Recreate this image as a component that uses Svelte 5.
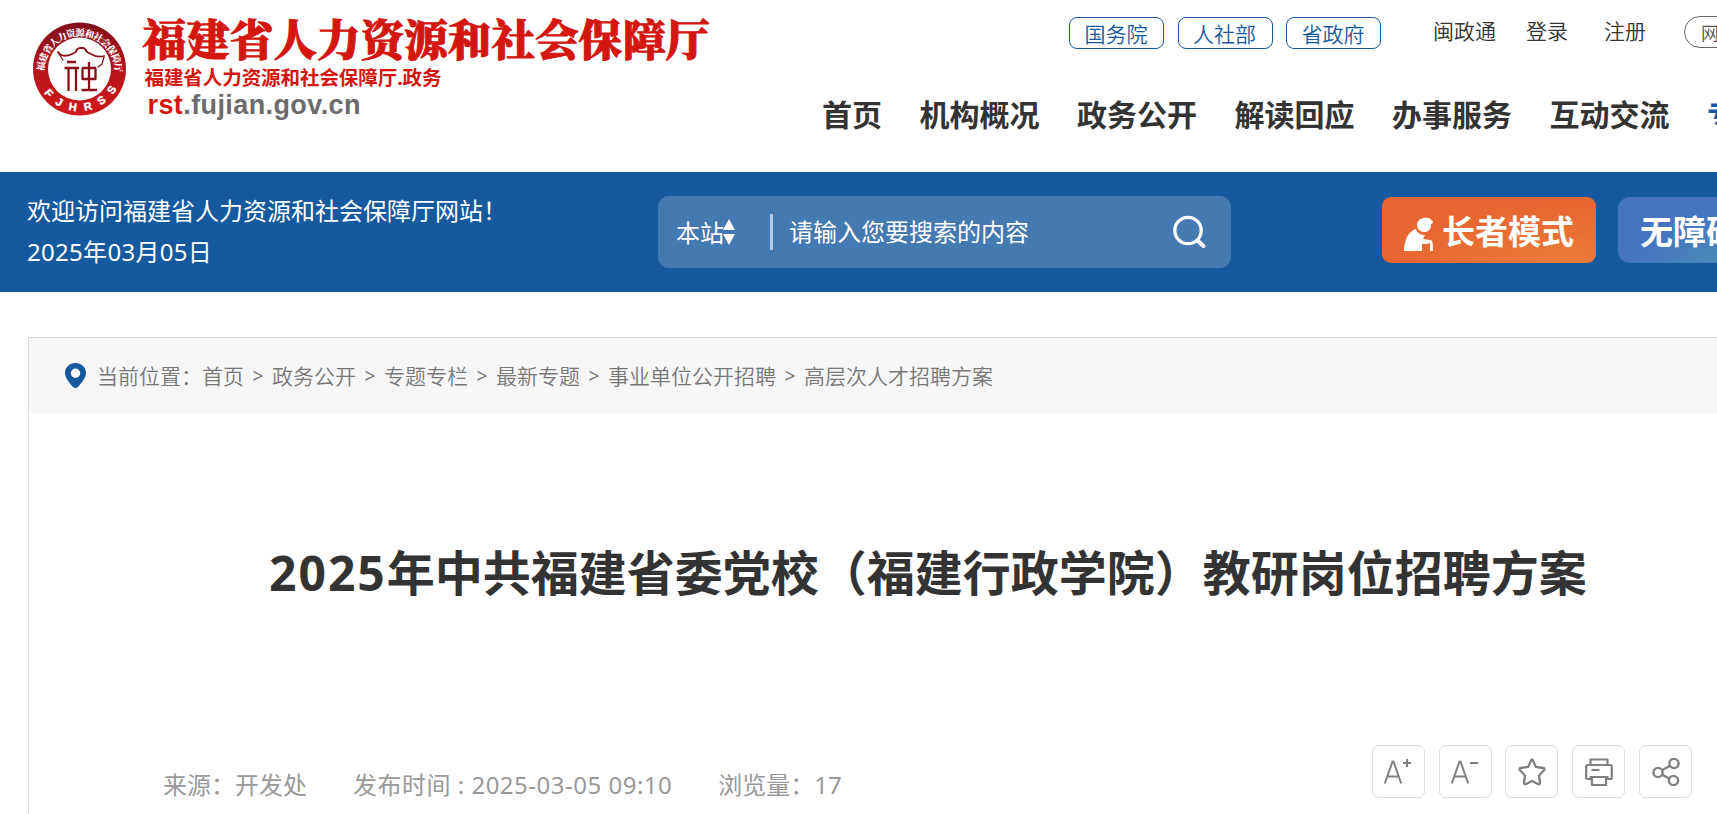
<script>
  // Links do topo
  const portals = ['国务院', '人社部', '省政府'];
  const accountLinks = ['闽政通', '登录', '注册'];

  const menu = ['首页', '机构概况', '政务公开', '解读回应', '办事服务', '互动交流', '专题专栏'];
  const activeMenu = '专题专栏';

  const crumbs = ['首页', '政务公开', '专题专栏', '最新专题', '事业单位公开招聘', '高层次人才招聘方案'];

  const tools = ['larger', 'smaller', 'star', 'print', 'share'];

  let keyword = '';
</script>

<div class="page">
  <header class="header">
    <svg class="logo" width="720" height="130" viewBox="0 0 720 130">
      <defs>
        <linearGradient id="seal" x1="0" y1="0" x2="0" y2="1">
          <stop offset="0" stop-color="#80101a" />
          <stop offset="0.55" stop-color="#b9151b" />
          <stop offset="1" stop-color="#d01a1c" />
        </linearGradient>
        <path id="arcTop" d="M44.2 71.500 A35.300 35.300 0 1 1 114.800 71.500" />
        <path id="arcBottom" d="M39 84 A43 43 0 0 0 119 84" />
      </defs>
      <circle cx="79.5" cy="69" r="46.5" fill="url(#seal)" />
      <circle cx="79.5" cy="69" r="31.5" fill="#fff" />
      <text class="ring serif" font-size="9.5"><textPath href="#arcTop" textLength="112">福建省人力资源和社会保障厅</textPath></text>
      <text class="ring latin" font-size="11"><textPath href="#arcBottom" startOffset="10" textLength="87">FJHRSS</textPath></text>
      <g fill="none" stroke="#8a1119" stroke-linecap="round" stroke-linejoin="round">
        <path stroke-width="1.8" d="M58 52 C60 56 66 57 72 54 L76 52 C76 50 78 48 80 48 H83 C85 48 86 50 87 52 L91 54 C96 57 101 57 104 56" />
        <path stroke-width="1.3" d="M59 54 L63 60 M104 57 L102 64 L98 67" />
        <path stroke-width="2.3" stroke-linecap="butt" d="M67 62 H76 M64.500 68 H79 M68.500 68 V91 M76 68 V91 M82 68 H96 M82.500 68 V79 H95.500 V68 M89 62 V90 M81.500 90 H97" />
      </g>
      <text class="name" x="142.5" y="55.5" font-size="43.5" textLength="567">福建省人力资源和社会保障厅</text>
      <text class="subname" x="144.5" y="85" font-size="19.5" textLength="297">福建省人力资源和社会保障厅.政务</text>
      <text class="domain" x="147.5" y="114" font-size="27" textLength="213"><tspan fill="#d3160f">rst</tspan>.fujian.gov.cn</text>
    </svg>

    <div class="header-right">
      <div class="top-links">
        {#each portals as portal}
          <a class="portal" href="#top">{portal}</a>
        {/each}
        <div class="account">
          {#each accountLinks as link}
            <a href="#top">{link}</a>
          {/each}
        </div>
        <a class="site-group" href="#top">网站群</a>
      </div>
      <nav class="menu">
        {#each menu as item}
          <a class:active={item === activeMenu} href="#top">{item}</a>
        {/each}
      </nav>
    </div>
  </header>

  <section class="band">
    <div class="welcome">
      <p>欢迎访问福建省人力资源和社会保障厅网站！</p>
      <p class="date">2025年03月05日</p>
    </div>
    <div class="search">
      <span class="scope">本站</span>
      <svg class="sort" width="12" height="26" viewBox="0 0 12 26">
        <path d="M6 0 L12 11 H0 Z M0 15 H12 L6 26 Z" fill="#fff" />
      </svg>
      <span class="divider"></span>
      <input type="text" bind:value={keyword} placeholder="请输入您要搜索的内容" />
      <svg width="34" height="34" viewBox="0 0 34 34" fill="none" stroke="#fff" stroke-width="3.300" stroke-linecap="round">
        <circle cx="15" cy="15.5" r="13.2" />
        <path d="M24.500 25.500 L30.500 31" stroke-width="4" />
      </svg>
    </div>
    <a class="mode elder" href="#top">
      <svg width="30" height="34" viewBox="0 0 30 34" fill="#fff">
        <path d="M13 7 C14 2 19 0 24 1 C27 1.500 27.500 3 29 4.500 L28.500 6.500 L27 7 C27.500 12 24 15.500 20 15 C16 15 13 12 13 7 Z" />
        <path d="M0 34 C0 24 4 14 12 12 C13 16 17 18 21 18 L19 22 L26 23 C29 23.500 29 26 29 34 H26 V26 L23 27 L18 27 V34 Z" />
      </svg>
      长者模式
    </a>
    <a class="mode barrier" href="#top">无障碍浏览</a>
  </section>

  <main class="article">
    <div class="crumbs">
      <svg width="21" height="25" viewBox="0 0 21 25">
        <path fill="#15599f" fill-rule="evenodd" d="M10.500 0 C4.500 0 0 4.500 0 10 C0 15 4 19 8 24 Q10.500 26 13 24 C17 19 21 15 21 10 C21 4.500 16.500 0 10.500 0 Z M10.500 5.500 A4.700 4.700 0 1 1 10.500 15 A4.700 4.700 0 1 1 10.500 5.500 Z" />
      </svg>
      <span class="here">当前位置：</span>
      {#each crumbs as crumb, i}
        {#if i > 0}<span class="sep">&gt;</span>{/if}
        <a href="#top">{crumb}</a>
      {/each}
    </div>

    <h1><span>2025</span>年中共福建省委党校（福建行政学院）教研岗位招聘方案</h1>

    <div class="info">
      <div class="meta">
        <span>来源：开发处</span>
        <span class="time">发布时间 : 2025-03-05 09:10</span>
        <span>浏览量：17</span>
      </div>
      <div class="tools">
        {#each tools as tool}
          <button aria-label={tool}>
            <svg width="28" height="28" viewBox="0 0 28 28" fill="none" stroke="#808080" stroke-width="2" stroke-linejoin="round">
              {#if tool === 'larger'}
                <path d="M.8 25.500 L8.500 3.500 H9.500 L17.200 25.500 M3.500 18.500 H14.500 M19 5 H27 M23 1 V9" />
              {:else if tool === 'smaller'}
                <path d="M.8 25.500 L8.500 3.500 H9.500 L17.200 25.500 M3.500 18.500 H14.500 M19 5 H27" />
              {:else if tool === 'star'}
                <path stroke-width="2.300" d="M13 2.500 Q14 .5 15 2.500 L17.800 8.800 L25 10 Q27.500 10.500 25.800 12.500 L21 17.500 L22 24.500 Q22.300 27 20 26 L14 23 L8 26 Q5.700 27 6 24.500 L7 17.500 L2.200 12.500 Q.5 10.500 3 10 L10.200 8.800 Z" />
              {:else if tool === 'print'}
                <path stroke-width="2.200" d="M5.500 7 V1.500 H22.500 V7 M6 21 H2.500 Q1.200 21 1.200 19.500 V8.500 Q1.200 7 2.500 7 H25.500 Q26.800 7 26.800 8.500 V19.500 Q26.800 21 25.500 21 H22 M4.500 19 H23.500 M7 19 V27 H21 V19 M6.500 12 H14.500" />
              {:else}
                <g stroke-width="2.400">
                  <circle cx="6" cy="14.500" r="4.600" />
                  <circle cx="22" cy="5.500" r="4.600" />
                  <circle cx="21.500" cy="22.500" r="4.600" />
                  <path d="M10 12.200 L18 7.800 M10 16.600 L17.500 20.500" />
                </g>
              {/if}
            </svg>
          </button>
        {/each}
      </div>
    </div>
  </main>
</div>

<style>
  :global(body) {
    background: #fff;
    overflow: hidden;
  }

  .page {
    width: 1717px;
    height: 814px;
    overflow: hidden;
    font-family: "Noto Sans", "Noto Sans CJK SC", sans-serif;
    color: #333;
  }

  a {
    color: inherit;
    text-decoration: none;
    white-space: nowrap;
  }

  .header {
    display: flex;
    height: 172px;
  }

  .logo {
    flex: none;
  }

  .ring {
    fill: #fff;
    font-weight: 700;
  }

  .serif {
    font-family: "Noto Serif CJK SC", "Noto Sans CJK SC", serif;
    font-weight: 900;
  }

  .latin {
    font-family: "Liberation Sans", Arial, sans-serif;
    stroke: #fff;
    stroke-width: 0.4;
  }

  .name {
    fill: #d3160f;
    stroke: #d3160f;
    stroke-width: 1;
    font-family: "Noto Serif CJK SC", "Noto Sans CJK SC", serif;
    font-weight: 900;
  }

  .subname {
    fill: #d3160f;
    font-weight: 700;
  }

  .domain {
    fill: #6b6b6b;
    font-family: "Liberation Sans", Arial, sans-serif;
    font-weight: 700;
  }

  .header-right {
    flex: none;
    width: 997px;
  }

  .top-links {
    display: flex;
    align-items: flex-start;
    padding: 17px 0 0 349px;
    font-family: "Noto Sans CJK SC", sans-serif;
    font-size: 21px;
    font-weight: 350;
  }

  .portal {
    flex: none;
    box-sizing: border-box;
    width: 95px;
    height: 32px;
    margin-right: 13.500px;
    padding-right: 1px;
    border: 1px solid #15599f;
    border-radius: 8px;
    color: #15599f;
    line-height: 30px;
    text-align: center;
  }

  .account {
    display: flex;
    flex: none;
    width: 251px;
    margin-left: 38.500px;
    line-height: 27px;
  }

  .account a {
    margin-right: 30px;
  }

  .account a:nth-child(2) {
    margin-right: 36px;
  }

  .site-group {
    flex: none;
    height: 30px;
    margin-top: -1px;
    padding: 0 16px;
    border: 1px solid #666;
    border-radius: 16px;
    color: #555;
    font-size: 18px;
    line-height: 31px;
  }

  .menu {
    display: flex;
    gap: 37.500px;
    padding: 44px 0 0 102px;
    font-size: 30px;
    font-weight: 700;
    line-height: 44px;
  }

  .active {
    color: #15599f;
  }

  .band {
    display: flex;
    box-sizing: border-box;
    height: 120px;
    padding: 24px 0 0 27px;
    background: #15599f;
    color: #fff;
  }

  .welcome {
    flex: none;
    width: 631px;
    margin-top: -6px;
    font-size: 24px;
    line-height: 41px;
  }

  .welcome p {
    margin: 0;
  }

  .welcome .date {
    letter-spacing: 0.3px;
  }

  .search {
    display: flex;
    flex: none;
    align-items: center;
    box-sizing: border-box;
    width: 573px;
    height: 72px;
    padding: 0 24px 0 18px;
    border-radius: 11px;
    background: #4579b2;
    font-size: 24px;
  }

  .scope,
  input {
    padding: 0 0 2px;
  }

  .sort {
    flex: none;
    margin-left: -1px;
  }

  .divider {
    width: 3px;
    height: 36px;
    margin: 0 16px 0 35px;
    background: #b5c9e0;
  }

  input {
    flex: 1;
    min-width: 0;
    border: 0;
    outline: 0;
    background: none;
    color: #fff;
    font: inherit;
  }

  input::placeholder {
    color: #fff;
    opacity: 1;
  }

  .mode {
    display: flex;
    flex: none;
    align-items: center;
    box-sizing: border-box;
    height: 66px;
    margin-top: 1px;
    font-size: 33px;
    font-weight: 700;
  }

  .elder {
    gap: 8px;
    width: 214px;
    margin-left: 151px;
    padding-left: 22px;
    border-radius: 9px;
    background: radial-gradient(ellipse at 85% 110%, #ec7d3a, #e76631 65%);
  }

  .elder svg {
    margin-top: 8px;
  }

  .barrier {
    width: 240px;
    margin-left: 22px;
    padding-left: 22px;
    border-radius: 12px;
    background: radial-gradient(ellipse at 50% 110%, #4a8fb5, #4774c1 60%);
  }

  .article {
    width: 1800px;
    height: 500px;
    margin: 45px 0 0 28px;
    border: 1px solid #ddd;
  }

  .crumbs {
    display: flex;
    align-items: center;
    height: 75px;
    padding-left: 36px;
    background: #f7f7f7;
    color: #777;
    font-family: "Noto Sans CJK SC", sans-serif;
    font-size: 21px;
    font-weight: 350;
  }

  .crumbs span,
  .crumbs a {
    padding-bottom: 2px;
  }

  .here {
    margin-left: 11px;
  }

  .crumbs .sep {
    width: 28px;
    padding-bottom: 0;
    font-family: "Noto Sans", sans-serif;
    font-size: 19px;
    font-weight: 400;
    text-align: center;
  }

  h1 {
    margin: 124px 0 0 240px;
    font-size: 48px;
    line-height: 72px;
    white-space: nowrap;
  }

  h1 span {
    letter-spacing: 2px;
  }

  .info {
    display: flex;
    justify-content: space-between;
    width: 1529px;
    margin: 136px 0 0 134px;
  }

  .meta {
    display: flex;
    gap: 46px;
    padding-top: 22px;
    color: #999;
    font-size: 24px;
    line-height: 36px;
  }

  .time {
    letter-spacing: 0.5px;
  }

  .tools {
    display: flex;
    gap: 13.800px;
  }

  button {
    display: flex;
    align-items: center;
    justify-content: center;
    width: 53px;
    height: 53px;
    padding: 0;
    border: 1px solid #ddd;
    border-radius: 7px;
    background: #fff;
  }
</style>
